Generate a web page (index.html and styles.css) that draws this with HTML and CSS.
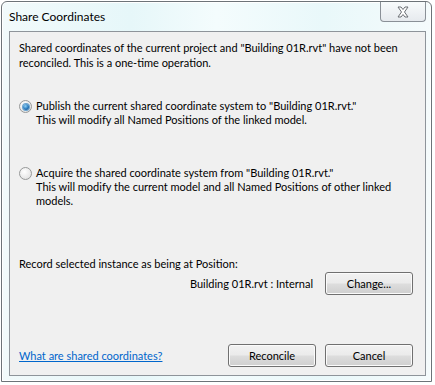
FILE: index.html
```html
<!DOCTYPE html>
<html lang="en">
<head>
    <title>Share Coordinates</title>
    <link rel="stylesheet" href="styles.css">
</head>
<body>
    <div class="window">
        <div class="titlebar">
            <span class="title">Share Coordinates</span>
            <div class="close">
                <svg width="14" height="12" viewBox="0 0 14 12">
                    <path d="M2 1 L5 1 L7 3.5 L9 1 L12 1 L8.5 6 L12 11 L9 11 L7 8.5 L5 11 L2 11 L5.5 6 Z" fill="#fff" stroke="#6b6f74" stroke-width="1" stroke-linejoin="round"/>
                </svg>
            </div>
        </div>
        <div class="client">
            <p class="intro">Shared coordinates of the current project and "Building 01R.rvt" have not been reconciled. This is a one-time operation.</p>

            <label class="option first">
                <span class="radio checked"></span>
                <span class="option-text">Publish the current shared coordinate system to "Building 01R.rvt."<br>This will modify all Named Positions of the linked model.</span>
            </label>

            <label class="option second">
                <span class="radio"></span>
                <span class="option-text">Acquire the shared coordinate system from "Building 01R.rvt."<br>This will modify the current model and all Named Positions of other linked models.</span>
            </label>

            <div class="record">Record selected instance as being at Position:</div>
            <div class="position-row">
                <span>Building 01R.rvt : Internal</span>
                <button class="btn">Change...</button>
            </div>

            <div class="footer">
                <a class="help" href="#">What are shared coordinates?</a>
                <div class="buttons">
                    <button class="btn">Reconcile</button>
                    <button class="btn">Cancel</button>
                </div>
            </div>
        </div>
    </div>
</body>
</html>
```

FILE: styles.css
```css
body {
    margin: 0px;
    background-color: #ffffff;
    font-family: Lato, "Open Sans", Arial, sans-serif;
    font-size: 11px;
    color: #000000;
}
.window {
    width: 431px;
    height: 381px;
    margin: 1px 0 0 1px;
    border: 1px solid #6d7378;
    border-radius: 6px 6px 0 0;
    background: linear-gradient(90deg, #f2fafb 0%, #e6f7f9 30%, #f4fcfd 50%, #e9f8fa 75%, #f5fbfc 100%);
    box-shadow: inset 0 0 0 1px #ffffff;
    display: flex;
    flex-direction: column;
    box-sizing: border-box;
    padding: 0 5px 5px 7px;
}
.titlebar {
    height: 29px;
    display: flex;
    align-items: flex-start;
    justify-content: space-between;
}
.title {
    margin-top: 7px;
    font-size: 12px;
    color: #000;
}
.close {
    width: 44px;
    height: 19px;
    border: 1px solid #8a9097;
    border-top: none;
    border-radius: 0 0 4px 4px;
    background: linear-gradient(#f8fbfc, #e6eaee);
    display: flex;
    align-items: center;
    justify-content: center;
}
.client {
    flex: 1;
    background: #f0f0f0;
    border: 1px solid #8e949a;
    display: flex;
    flex-direction: column;
    padding: 0 12px 8px 9px;
    line-height: 14px;
}
.intro {
    margin: 8px 0 0 0;
    width: 392px;
    line-height: 15px;
}
.option {
    display: flex;
    align-items: flex-start;
}
.option.first {
    margin-top: 29px;
}
.option.second {
    margin-top: 39px;
}
.option-text {
    margin-left: 4px;
    width: 362px;
}
.radio {
    width: 11px;
    height: 11px;
    border: 1px solid #979999;
    border-radius: 50%;
    background: radial-gradient(circle at 40% 35%, #ffffff 0%, #e6e6e6 70%, #d2d2d2 100%);
    margin-top: 1px;
    flex-shrink: 0;
    display: flex;
    align-items: center;
    justify-content: center;
}
.radio.checked::after {
    content: "";
    width: 6px;
    height: 6px;
    border-radius: 50%;
    background: radial-gradient(circle at 40% 35%, #8fd0f5 0%, #2779bd 55%, #0d3f7a 100%);
    box-shadow: 0 0 0 1px #6aa3cf;
}
.record {
    margin-top: 49px;
}
.position-row {
    margin-top: 1px;
    display: flex;
    justify-content: flex-end;
    align-items: center;
    gap: 12px;
}
.btn {
    width: 88px;
    height: 23px;
    font-family: inherit;
    font-size: 11px;
    color: #000;
    border: 1px solid #707070;
    border-radius: 3px;
    background: linear-gradient(#f2f2f2 0%, #ebebeb 48%, #dddddd 52%, #cfcfcf 100%);
    box-shadow: inset 0 0 0 1px #fbfbfb;
    padding: 0;
}
.footer {
    margin-top: auto;
    display: flex;
    justify-content: space-between;
    align-items: center;
}
.help {
    color: #0066cc;
    text-decoration: underline;
}
.buttons {
    display: flex;
    gap: 9px;
}
```
